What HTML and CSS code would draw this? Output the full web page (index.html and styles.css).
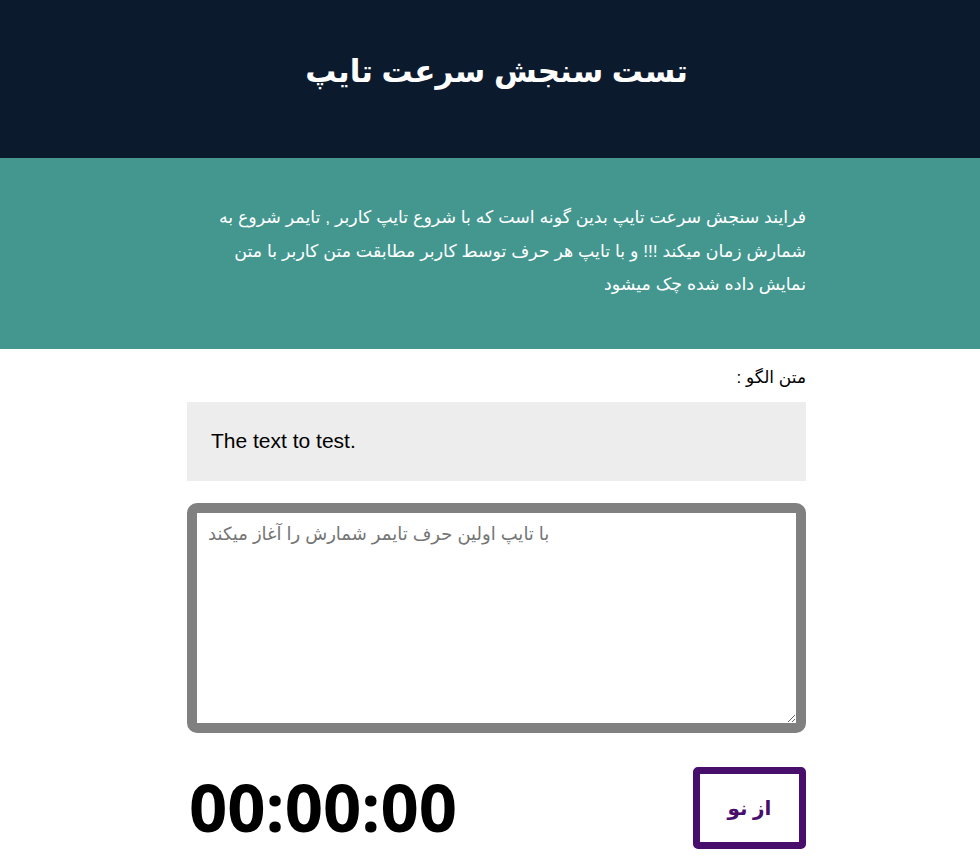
FILE: index.html
```html
<!DOCTYPE html>
<html lang="fa">
<head>
<meta charset="utf-8">
<title>تست سنجش سرعت تایپ</title>
<link rel="stylesheet" href="styles.css">
</head>
<body>
<header class="masthead">
  <div class="wrap">
    <h1 class="title">تست سنجش سرعت تایپ</h1>
  </div>
</header>
<section class="intro">
  <div class="wrap">
    <p class="intro-text">فرایند سنجش سرعت تایپ بدین گونه است که با شروع تایپ کاربر , تایمر شروع به شمارش زمان میکند !!! و با تایپ هر حرف توسط کاربر مطابقت متن کاربر با متن نمایش داده شده چک میشود</p>
  </div>
</section>
<main class="wrap main">
  <p class="label">متن الگو :</p>
  <div class="sample" dir="ltr">The text to test.</div>
  <div class="area-box">
    <textarea class="area" dir="ltr" placeholder="با تایپ اولین حرف تایمر شمارش را آغاز میکند"></textarea>
  </div>
  <div class="meta" dir="ltr">
    <div class="timer">00:00:00</div>
    <button class="reset" type="button">از نو</button>
  </div>
</main>
</body>
</html>
```

FILE: styles.css
```css
html, body {
  margin: 0;
  padding: 0;
}
body {
  direction: rtl;
  font-family: "Liberation Sans", "DejaVu Sans", sans-serif;
  background: #ffffff;
  color: #000;
}
.wrap {
  width: 619px;
  margin-right: 174px;
  margin-left: 187px;
}
.masthead {
  background: #0c1a2e;
  height: 158px;
  display: flex;
  align-items: center;
}
.title {
  margin: 0;
  color: #ffffff;
  font-size: 31px;
  font-weight: bold;
  text-align: center;
  padding-bottom: 16px;
}
.intro {
  background: #43978f;
  padding: 43px 0 47px;
}
.intro-text {
  margin: 0;
  color: #ffffff;
  font-size: 17.4px;
  line-height: 33.5px;
  text-align: right;
}
.main {
  padding-top: 17px;
}
.label {
  margin: 0 0 12px;
  font-size: 17px;
  line-height: 24px;
}
.sample {
  background: #ededed;
  height: 79px;
  box-sizing: border-box;
  padding: 0 24px;
  display: flex;
  align-items: center;
  font-size: 21px;
  text-align: left;
}
.area-box {
  margin-top: 22px;
  border: 10px solid #808080;
  border-radius: 10px;
  height: 230px;
  box-sizing: border-box;
  display: flex;
}
.area {
  flex: 1;
  margin: 0;
  border: 0;
  padding: 10px 11px;
  font-family: "Liberation Sans", "DejaVu Sans", sans-serif;
  font-size: 18px;
  resize: vertical;
  outline: none;
}
.area::placeholder {
  color: #757575;
}
.meta {
  margin-top: 34px;
  display: flex;
  justify-content: space-between;
  align-items: flex-start;
}
.timer {
  font-family: "Open Sans", sans-serif;
  font-weight: bold;
  font-size: 67px;
  line-height: 1;
  margin-top: 6px;
  margin-left: 2px;
}
.reset {
  width: 113px;
  height: 82px;
  box-sizing: border-box;
  border: 7px solid #480e6b;
  border-radius: 5px;
  background: #ffffff;
  color: #480e6b;
  font-family: "Liberation Sans", "DejaVu Sans", sans-serif;
  font-weight: bold;
  font-size: 20px;
  padding: 0;
}
```
